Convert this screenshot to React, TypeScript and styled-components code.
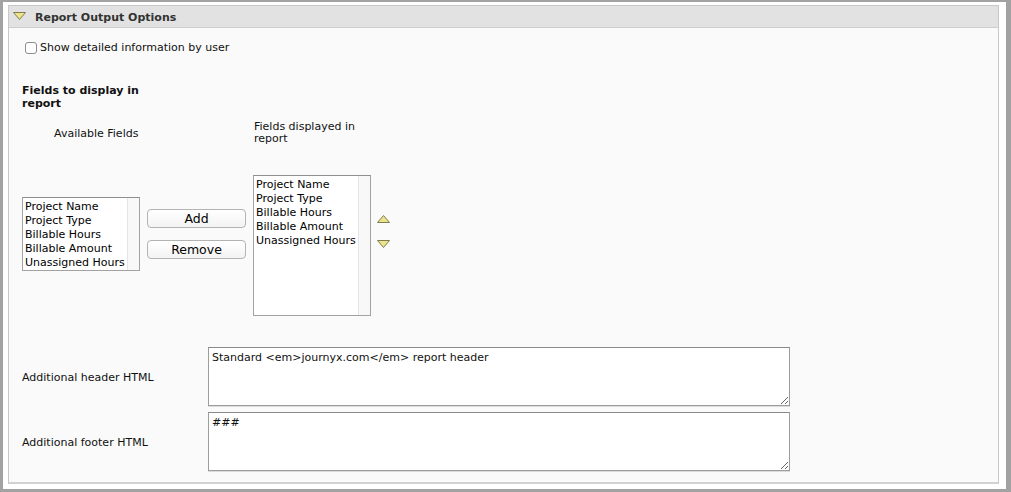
import React from 'react';
import styled, { createGlobalStyle } from 'styled-components';

const fields = ['Project Name', 'Project Type', 'Billable Hours', 'Billable Amount', 'Unassigned Hours'];

function Triangle({ dir, w = 12, h = 7 }: { dir: 'up' | 'down'; w?: number; h?: number }) {
  const points =
    dir === 'up'
      ? `0.5,${h - 0.5} ${w / 2},0.5 ${w - 0.5},${h - 0.5}`
      : `0.5,0.5 ${w - 0.5},0.5 ${w / 2},${h - 0.5}`;
  return (
    <svg width={w} height={h} viewBox={`0 0 ${w} ${h}`}>
      <polygon points={points} fill="#eee487" stroke="#7f7c55" strokeWidth="1" strokeLinejoin="round" />
    </svg>
  );
}

export default function App() {
  return (
    <>
      <GlobalStyle />
      <Frame>
        <Panel>
          <Header>
            <Triangle dir="down" w={13} h={8} />
            <Title>Report Output Options</Title>
          </Header>
          <Body>
            <CheckRow>
              <Check type="checkbox" />
              <span>Show detailed information by user</span>
            </CheckRow>

            <SectionTitle>Fields to display in report</SectionTitle>

            <HeadRow>
              <AvailHead>Available Fields</AvailHead>
              <ShownHead>Fields displayed in report</ShownHead>
            </HeadRow>

            <ListRow>
              <ListBox $top={22} $height={74}>
                <Items>
                  {fields.map((f) => <Item key={f}>{f}</Item>)}
                </Items>
                <Track />
              </ListBox>
              <ButtonCol>
                <Button>Add</Button>
                <Button>Remove</Button>
              </ButtonCol>
              <ListBox $top={0} $height={141}>
                <Items>
                  {fields.map((f) => <Item key={f}>{f}</Item>)}
                </Items>
                <Track />
              </ListBox>
              <ArrowCol>
                <Triangle dir="up" w={13} h={8} />
                <Triangle dir="down" w={13} h={8} />
              </ArrowCol>
            </ListRow>

            <HtmlRow $gap={31}>
              <HtmlLabel>Additional header HTML</HtmlLabel>
              <TextBox defaultValue="Standard <em>journyx.com</em> report header" />
            </HtmlRow>
            <HtmlRow $gap={6}>
              <HtmlLabel>Additional footer HTML</HtmlLabel>
              <TextBox defaultValue="###" />
            </HtmlRow>
          </Body>
        </Panel>
      </Frame>
    </>
  );
}

const GlobalStyle = createGlobalStyle`
  html, body {
    margin: 0;
    background: #fff;
  }
  body {
    font-family: "DejaVu Sans", Verdana, sans-serif;
    font-size: 11px;
    color: #111;
  }
`;

const Frame = styled.div`
  box-sizing: border-box;
  width: 1011px;
  height: 492px;
  border: solid #a2a2a2;
  border-width: 2px 5px 3px 3px;
  padding: 3px 7px 5px 5px;
  display: flex;
`;

const Panel = styled.div`
  flex: 1;
  display: flex;
  flex-direction: column;
  border: 1px solid #c8c8c8;
  border-bottom: 2px solid #d2d2d2;
  background: #fafafa;
`;

const Header = styled.div`
  box-sizing: border-box;
  height: 22px;
  display: flex;
  align-items: center;
  gap: 9px;
  padding: 1px 0 0 4px;
  background: #e2e2e2;
  border-bottom: 1px solid #cdcdcd;

  svg {
    margin-top: -2px;
  }
`;

const Title = styled.span`
  font-weight: bold;
  color: #333;
  padding-top: 1px;
`;

const Body = styled.div`
  padding-left: 13px;
`;

const CheckRow = styled.label`
  display: flex;
  align-items: center;
  gap: 3px;
  height: 13px;
  margin-top: 13px;
  padding-left: 3px;
  color: #111;
`;

const Check = styled.input`
  appearance: none;
  box-sizing: border-box;
  width: 12px;
  height: 12px;
  margin: 1px 0 0;
  border: 1px solid #8d8d8d;
  border-radius: 3px;
  background: #fff;
`;

const SectionTitle = styled.div`
  margin-top: 30px;
  width: 125px;
  font-weight: bold;
  line-height: 13px;
  color: #111;
`;

const HeadRow = styled.div`
  display: flex;
  align-items: center;
  margin-top: 10px;
  height: 26px;
`;

const AvailHead = styled.div`
  box-sizing: border-box;
  width: 231px;
  padding-left: 32px;
  padding-top: 1px;
`;

const ShownHead = styled.div`
  width: 117px;
  padding-left: 1px;
  line-height: 12px;
`;

const ListRow = styled.div`
  display: flex;
  align-items: flex-start;
  margin-top: 29px;
  height: 141px;
`;

const ListBox = styled.div<{ $top: number; $height: number }>`
  box-sizing: border-box;
  display: flex;
  width: 118px;
  height: ${(p) => p.$height}px;
  margin-top: ${(p) => p.$top}px;
  border: 1px solid #a2a2a2;
  border-top-color: #8e8e8e;
  background: #fff;
`;

const Items = styled.div`
  flex: 1;
  padding: 2px 0 0 2px;
`;

const Item = styled.div`
  line-height: 14px;
  color: #000;
  white-space: nowrap;
`;

const Track = styled.div`
  width: 11px;
  border-left: 1px solid #e4e4e4;
  background: #f8f8f8;
`;

const ButtonCol = styled.div`
  display: flex;
  flex-direction: column;
  gap: 12px;
  margin: 34px 7px 0;
`;

const Button = styled.button`
  box-sizing: border-box;
  width: 99px;
  height: 19px;
  padding: 0;
  border: 1px solid #b3b3b3;
  border-radius: 4px;
  background: linear-gradient(#ffffff, #f3f3f3);
  font-family: "DejaVu Sans", Verdana, sans-serif;
  font-size: 12.5px;
  color: #000;
`;

const ArrowCol = styled.div`
  display: flex;
  flex-direction: column;
  gap: 17px;
  margin: 40px 0 0 6px;

  svg {
    display: block;
  }
`;

const HtmlRow = styled.div<{ $gap: number }>`
  display: flex;
  align-items: center;
  margin-top: ${(p) => p.$gap}px;
`;

const HtmlLabel = styled.div`
  width: 186px;
  padding-top: 2px;
`;

const TextBox = styled.textarea`
  box-sizing: border-box;
  width: 582px;
  height: 59px;
  margin: 0;
  padding: 3px 3px;
  border: 1px solid #9c9c9c;
  border-top-color: #8a8a8a;
  box-shadow: 0 1px 0 #dcdcdc;
  background: #fff;
  font-family: "DejaVu Sans", Verdana, sans-serif;
  font-size: 11px;
  line-height: 13px;
  color: #111;
  resize: both;
  outline: none;
`;
